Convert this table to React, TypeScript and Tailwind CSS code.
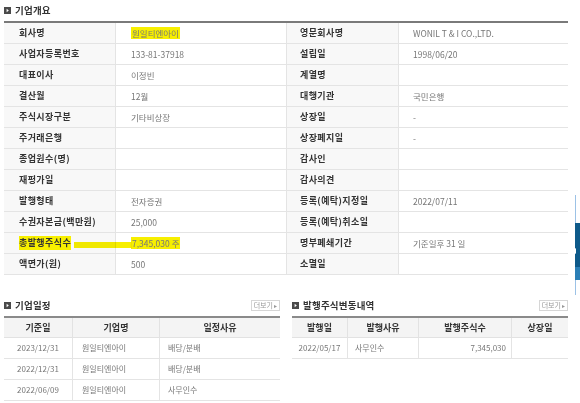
import React from "react";

type Pair = [string, string];

const leftRows: Pair[] = [
  ["회사명", "원일티엔아이"],
  ["사업자등록번호", "133-81-37918"],
  ["대표이사", "이정빈"],
  ["결산월", "12월"],
  ["주식시장구분", "기타비상장"],
  ["주거래은행", ""],
  ["종업원수(명)", ""],
  ["재평가일", ""],
  ["발행형태", "전자증권"],
  ["수권자본금(백만원)", "25,000"],
  ["총발행주식수", "7,345,030 주"],
  ["액면가(원)", "500"],
];

const rightRows: Pair[] = [
  ["영문회사명", "WONIL T & I CO.,LTD."],
  ["설립일", "1998/06/20"],
  ["계열명", ""],
  ["대행기관", "국민은행"],
  ["상장일", "-"],
  ["상장폐지일", "-"],
  ["감사인", ""],
  ["감사의견", ""],
  ["등록(예탁)지정일", "2022/07/11"],
  ["등록(예탁)취소일", ""],
  ["명부폐쇄기간", "기준일후 31 일"],
  ["소멸일", ""],
];

const schedule = [
  ["2023/12/31", "원일티엔아이", "배당/분배"],
  ["2022/12/31", "원일티엔아이", "배당/분배"],
  ["2022/06/09", "원일티엔아이", "사무인수"],
];

const TitleIcon = () => (
  <svg width="7" height="7" viewBox="0 0 7 7" className="shrink-0">
    <rect width="7" height="7" fill="#4a4a4a" />
    <path d="M2.6 1.8 L4.8 3.5 L2.6 5.2 Z" fill="#fff" />
  </svg>
);

const SectionTitle = ({ title }: { title: string }) => (
  <div className="flex items-center gap-[4px]">
    <TitleIcon />
    <span className="text-[9.5px] font-bold text-[#333] tracking-[0.2px]">{title}</span>
  </div>
);

const MoreButton = () => (
  <div className="flex items-center h-[11px] px-[2px] border border-[#d6d6d6] text-[7px] text-[#999] leading-none">
    더보기<span className="ml-[1px] text-[6px]">▸</span>
  </div>
);

const App = () => {
  return (
    <div className="relative w-[580px] h-[403px] overflow-hidden bg-white font-['Noto_Sans_CJK_KR','Noto_Sans',sans-serif]">
      <div className="w-[564px] ml-[4px]">
        <div className="h-[21px] flex items-center">
          <SectionTitle title="기업개요" />
        </div>

        {/* 기업개요 table */}
        <div className="border-t-2 border-[#7a7a7a]">
          {leftRows.map((l, i) => {
            const r = rightRows[i];
            const mark = i === 0 || i === 10;
            return (
              <div
                key={l[0]}
                className="relative grid grid-cols-[112px_171px_112px_169px] h-[21px] border-b border-[#e4e4e4]"
              >
                <div className="flex items-center pl-[15px] bg-[#f8f8f8] border-r border-[#e4e4e4] text-[9px] font-bold text-[#333] tracking-[0.4px] whitespace-nowrap">
                  <span className={i === 10 ? "bg-[#f7ef00]" : ""}>{l[0]}</span>
                </div>
                <div className="flex items-center pl-[15px] border-r border-[#e4e4e4] text-[8.5px] text-[#777] whitespace-nowrap">
                  <span className={mark ? "bg-[#f7ef00] px-px" : ""}>{l[1]}</span>
                </div>
                <div className="flex items-center pl-[13px] bg-[#f8f8f8] border-r border-[#e4e4e4] text-[9px] font-bold text-[#333] tracking-[0.4px] whitespace-nowrap">
                  {r[0]}
                </div>
                <div className="flex items-center pl-[14px] text-[8.5px] text-[#777] whitespace-nowrap">
                  {r[1]}
                </div>
                {i === 10 && (
                  <div className="absolute left-[70px] top-[9px] w-[58px] h-[6px] bg-[#f7ef00] mix-blend-multiply" />
                )}
              </div>
            );
          })}
        </div>

        <div className="flex gap-[12px] mt-[20px]">
          {/* 기업일정 */}
          <div className="w-[276px]">
            <div className="h-[21px] flex items-center justify-between">
              <SectionTitle title="기업일정" />
              <MoreButton />
            </div>
            <div className="border-t-2 border-[#8a8a8a]">
              <div className="grid grid-cols-[69px_87px_120px] h-[20px] bg-[#f4f4f4] border-b border-[#e2e2e2] text-[9px] font-bold text-[#333]">
                <div className="flex items-center justify-center border-r border-[#e2e2e2]">기준일</div>
                <div className="flex items-center justify-center border-r border-[#e2e2e2]">기업명</div>
                <div className="flex items-center justify-center">일정사유</div>
              </div>
              {schedule.map((row, i) => (
                <div
                  key={i}
                  className="grid grid-cols-[69px_87px_120px] h-[21px] border-b border-[#e4e4e4] text-[8px] text-[#777]"
                >
                  <div className="flex items-center justify-center border-r border-[#e4e4e4]">{row[0]}</div>
                  <div className="flex items-center pl-[9px] border-r border-[#e4e4e4]">{row[1]}</div>
                  <div className="flex items-center pl-[8px]">{row[2]}</div>
                </div>
              ))}
            </div>
          </div>

          {/* 발행주식변동내역 */}
          <div className="w-[276px]">
            <div className="h-[21px] flex items-center justify-between">
              <SectionTitle title="발행주식변동내역" />
              <MoreButton />
            </div>
            <div className="border-t-2 border-[#8a8a8a]">
              <div className="grid grid-cols-[56px_71px_93px_56px] h-[20px] bg-[#f4f4f4] border-b border-[#e2e2e2] text-[9px] font-bold text-[#333]">
                <div className="flex items-center justify-center border-r border-[#e2e2e2]">발행일</div>
                <div className="flex items-center justify-center border-r border-[#e2e2e2]">발행사유</div>
                <div className="flex items-center justify-center border-r border-[#e2e2e2]">발행주식수</div>
                <div className="flex items-center justify-center">상장일</div>
              </div>
              <div className="grid grid-cols-[56px_71px_93px_56px] h-[21px] border-b border-[#e4e4e4] text-[8px] text-[#777]">
                <div className="flex items-center justify-center border-r border-[#e4e4e4]">2022/05/17</div>
                <div className="flex items-center pl-[7px] border-r border-[#e4e4e4]">사무인수</div>
                <div className="flex items-center justify-end pr-[5px] border-r border-[#e4e4e4]">7,345,030</div>
                <div />
              </div>
            </div>
          </div>
        </div>
      </div>

      {/* floating side widget, mostly off-screen */}
      <div className="absolute left-[575px] top-[195px] w-px h-[100px] bg-[#9cc2e6]" />
      <div className="absolute left-[575px] top-[223px] w-[6px] h-[57px] flex flex-col">
        <div className="flex-1 bg-[#0e5a8a]" />
        <div className="h-[13px] bg-[#2b7fb6]" />
      </div>
      <div className="absolute left-[572px] top-[248px] w-0 h-0 border-y-[3px] border-y-transparent border-r-[4px] border-r-white" />
    </div>
  );
};

export default App;
